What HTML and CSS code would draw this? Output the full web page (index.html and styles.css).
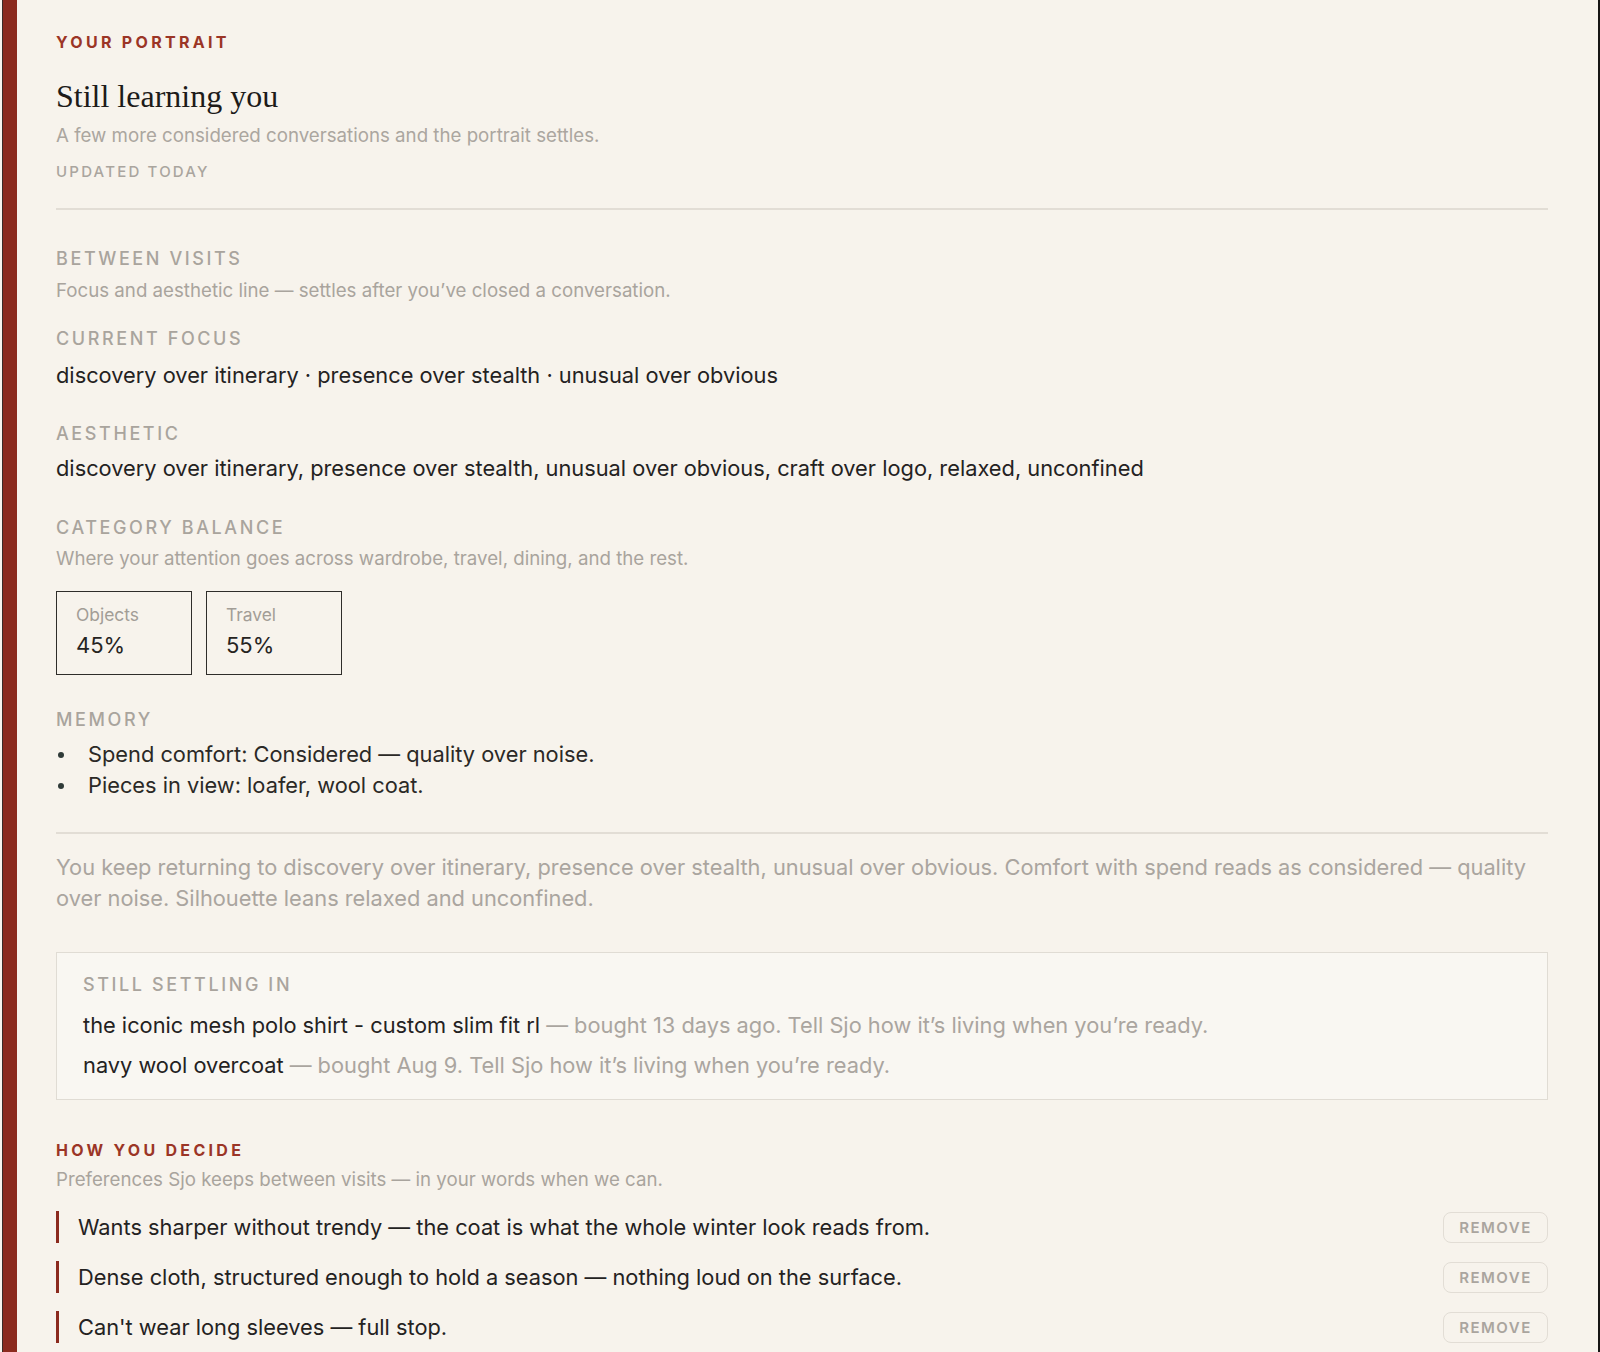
FILE: index.html
```html
<!doctype html>
<html>
  <head>
    <title>Your portrait</title>
    <meta charset="utf-8" />
    <link rel="stylesheet" href="styles.css">
  </head>
  <body>
    <div class="page">
      <div class="eyebrow">Your portrait</div>
      <h1 class="title">Still learning you</h1>
      <p class="lede">A few more considered conversations and the portrait settles.</p>
      <div class="stamp">Updated today</div>

      <hr class="rule rule-top">

      <div class="label label-first">Between visits</div>
      <p class="hint">Focus and aesthetic line — settles after you’ve closed a conversation.</p>

      <div class="label">Current focus</div>
      <p class="value">discovery over itinerary · presence over stealth · unusual over obvious</p>

      <div class="label label-gap">Aesthetic</div>
      <p class="value value-tight">discovery over itinerary, presence over stealth, unusual over obvious, craft over logo, relaxed, unconfined</p>

      <div class="label label-gap label-balance">Category balance</div>
      <p class="hint hint-tight">Where your attention goes across wardrobe, travel, dining, and the rest.</p>
      <div class="tiles">
        <div class="tile">
          <div class="tile-name">Objects</div>
          <div class="tile-num">45%</div>
        </div>
        <div class="tile">
          <div class="tile-name">Travel</div>
          <div class="tile-num">55%</div>
        </div>
      </div>

      <div class="label label-memory">Memory</div>
      <ul class="memory">
        <li>Spend comfort: Considered — quality over noise.</li>
        <li>Pieces in view: loafer, wool coat.</li>
      </ul>

      <hr class="rule rule-mid">

      <p class="summary">You keep returning to discovery over itinerary, presence over stealth, unusual over obvious. Comfort with spend reads as considered — quality over noise. Silhouette leans relaxed and unconfined.</p>

      <div class="settling">
        <div class="label">Still settling in</div>
        <div class="settle-list">
          <div class="settle-row">the iconic mesh polo shirt - custom slim fit rl <span class="muted">— bought 13 days ago. Tell Sjo how it’s living when you’re ready.</span></div>
          <div class="settle-row">navy wool overcoat <span class="muted">— bought Aug 9. Tell Sjo how it’s living when you’re ready.</span></div>
        </div>
      </div>

      <div class="eyebrow eyebrow-decide">How you decide</div>
      <p class="hint">Preferences Sjo keeps between visits — in your words when we can.</p>
      <div class="decisions">
        <div class="decision">
          <span class="decision-text">Wants sharper without trendy — the coat is what the whole winter look reads from.</span>
          <button class="remove">Remove</button>
        </div>
        <div class="decision">
          <span class="decision-text">Dense cloth, structured enough to hold a season — nothing loud on the surface.</span>
          <button class="remove">Remove</button>
        </div>
        <div class="decision">
          <span class="decision-text">Can't wear long sleeves — full stop.</span>
          <button class="remove">Remove</button>
        </div>
      </div>
    </div>
  </body>
</html>
```

FILE: styles.css
```css
html, body {
  margin: 0;
  padding: 0;
  background-color: #f7f3ec;
}

body {
  font-family: Inter, "Noto Sans", sans-serif;
  color: #24221f;
  height: 1352px;
  overflow: hidden;
}

.page {
  margin-left: 3px;
  border-left: 14px solid #8b2a1e;
  border-right: 2px solid #161514;
  box-shadow: -1px 0 0 #3b2b27;
  height: 1352px;
  box-sizing: border-box;
  padding: 32px 50px 0 39px;
}

p {
  margin: 0;
}

.eyebrow {
  font-size: 16px;
  line-height: 20px;
  font-weight: 700;
  letter-spacing: 3.3px;
  text-transform: uppercase;
  color: #9b3526;
}

.title {
  margin: 26px 0 0 0;
  font-family: "Liberation Serif", serif;
  font-weight: 400;
  font-size: 32px;
  line-height: 36px;
  color: #1d1b19;
}

.lede {
  margin-top: 9px;
  font-size: 18.7px;
  line-height: 26px;
  color: #aba69f;
}

.stamp {
  margin-top: 13px;
  font-size: 15px;
  line-height: 20px;
  font-weight: 500;
  letter-spacing: 2.2px;
  text-transform: uppercase;
  color: #aaa59e;
}

.rule {
  border: 0;
  height: 2px;
  background-color: #e2ddd5;
  margin: 0;
}

.rule-top {
  margin-top: 26px;
}

.rule-mid {
  margin-top: 31px;
}

.label {
  font-size: 18px;
  line-height: 24px;
  font-weight: 500;
  letter-spacing: 2.6px;
  text-transform: uppercase;
  color: #a9a49d;
  margin-top: 24px;
}

.label-first {
  margin-top: 37px;
}

.label-gap {
  margin-top: 32px;
}

.label-balance {
  margin-top: 33px;
}

.label-memory {
  margin-top: 33px;
}

.hint {
  margin-top: 8px;
  font-size: 18.7px;
  line-height: 24px;
  color: #a9a49d;
}

.hint-tight {
  margin-top: 7px;
}

.value {
  margin-top: 9px;
  font-size: 21.8px;
  line-height: 30px;
  color: #24221f;
}

.value-tight {
  margin-top: 7px;
}

.tiles {
  display: flex;
  gap: 14px;
  margin-top: 20px;
}

.tile {
  width: 136px;
  height: 84px;
  box-sizing: border-box;
  border: 1.5px solid #2f2d2a;
  padding: 11px 19px;
}

.tile-name {
  font-size: 17.4px;
  line-height: 24px;
  color: #a29d96;
}

.tile-num {
  margin-top: 5px;
  font-size: 22px;
  line-height: 26px;
  color: #26241f;
}

.memory {
  margin: 7px 0 0 0;
  padding: 0;
  list-style: none;
  font-size: 21.8px;
  line-height: 31px;
  color: #2b2926;
}

.memory li {
  display: flex;
  align-items: center;
}

.memory li::before {
  content: '';
  flex: none;
  width: 6px;
  height: 6px;
  border-radius: 50%;
  background-color: #2f3a38;
  margin: 0 24px 0 2px;
}

.summary {
  margin-top: 18px;
  font-size: 21.8px;
  line-height: 30.5px;
  color: #aaa59f;
}

.settling {
  margin-top: 39px;
  border: 1px solid #e0dcd4;
  background-color: #f9f7f2;
  padding: 20px 26px 14px 26px;
}

.settling .label {
  margin-top: 0;
}

.settle-list {
  margin-top: 8px;
}

.settle-row {
  font-size: 21.8px;
  line-height: 40px;
  color: #24221f;
}

.muted {
  color: #aaa59f;
}

.eyebrow-decide {
  margin-top: 40px;
}

.decisions {
  margin-top: 19px;
  display: flex;
  flex-direction: column;
  gap: 18px;
}

.decision {
  display: flex;
  align-items: center;
  justify-content: space-between;
  height: 32px;
  border-left: 3px solid #8b2a1e;
  padding-left: 19px;
}

.decision-text {
  font-size: 21.8px;
  line-height: 30px;
  color: #24221f;
}

.remove {
  width: 105px;
  height: 31px;
  border: 1px solid #e2ddd5;
  border-radius: 8px;
  background-color: transparent;
  font-family: Inter, sans-serif;
  font-size: 15px;
  font-weight: 600;
  letter-spacing: 1.5px;
  text-transform: uppercase;
  color: #aaa59e;
  padding: 0;
}
```
